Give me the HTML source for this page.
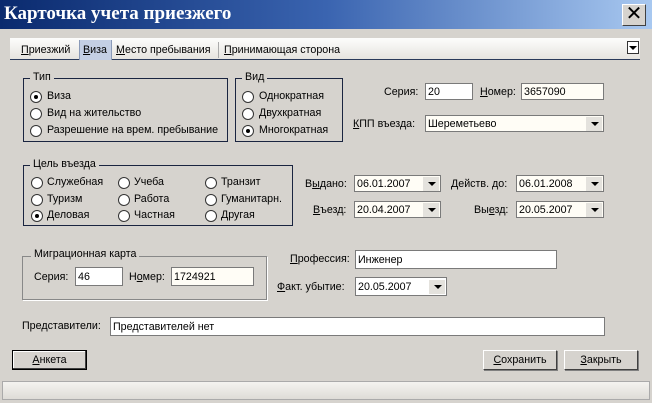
<!DOCTYPE html>
<html><head><meta charset="utf-8"><style>
body{margin:0;width:652px;height:403px;background:#d6d3ce;font-family:"Liberation Sans","DejaVu Sans",sans-serif;font-size:10.7px;color:#000;position:relative;overflow:hidden}
.a{position:absolute;white-space:nowrap}
.title{left:0;top:0;width:652px;height:29px;background:linear-gradient(90deg,#0a2a6e 0%,#3a64b0 50%,#a8c8f0 100%)}
.title span{position:absolute;left:4px;top:3px;font-family:"Liberation Serif",serif;font-weight:bold;font-size:19px;color:#fff}
.xb{left:622px;top:4px;width:22px;height:20px;background:#d6d3ce;border:1px solid #fff;border-right-color:#404040;border-bottom-color:#404040;font-size:20px;line-height:19px;text-align:center}
.strip{left:10px;top:38px;width:630px;height:21px;background:linear-gradient(#fdfdfc,#e6e4df);border-bottom:1px solid #2a3a5a}
.tab{top:44px}
.g{position:absolute;border:1px solid #1a2440}
.g2{position:absolute;border:1px solid #888;box-shadow:1px 1px 0 #fff}
.lg{position:absolute;top:-8px;left:6px;background:#d6d3ce;padding:0 3px}
.r{position:absolute;width:10px;height:10px;border-radius:50%;background:#fff;border:1px solid #333}
.r.on::after{content:"";position:absolute;left:3px;top:3px;width:4px;height:4px;border-radius:50%;background:#000}
.in{position:absolute;background:#fff;border:1px solid #7a7a7a;height:17px;line-height:17px;padding-left:2px;box-sizing:border-box}
.cb .ar{position:absolute;right:1px;top:1px;width:16px;height:14px;background:#e4e2dd}
.cb .ar::after{content:"";position:absolute;left:5px;top:5px;border-left:4px solid transparent;border-right:4px solid transparent;border-top:4px solid #000}
.btn{position:absolute;height:20px;line-height:19px;text-align:center;background:#d6d3ce;border:1px solid #fff;border-right-color:#404040;border-bottom-color:#404040;box-sizing:border-box;box-shadow:1px 1px 0 #808080}
u{text-decoration:underline}
</style></head><body>
<div class="a title"><span>Карточка учета приезжего</span></div>
<div class="a xb">✕</div>
<div class="a strip"></div>
<div class="a" style="left:79px;top:40px;width:31px;height:20px;background:#c4cfe4;border-left:1px solid #8a9ab8;border-right:1px solid #8a9ab8"></div>
<div class="a tab" style="left:21px"><u>П</u>риезжий</div>
<div class="a tab" style="left:83px"><u>В</u>иза</div>
<div class="a tab" style="left:116px"><u>М</u>есто пребывания</div>
<div class="a" style="left:218px;top:42px;width:1px;height:16px;background:#aaa"></div>
<div class="a tab" style="left:224px"><u>П</u>ринимающая сторона</div>
<div class="a" style="left:627px;top:41px;width:10px;height:11px;border:1px solid #333;background:#fff"></div>
<div class="a" style="left:629px;top:46px;border-left:4px solid transparent;border-right:4px solid transparent;border-top:4px solid #000"></div>

<div class="g" style="left:23px;top:78px;width:203px;height:62px"><span class="lg">Тип</span></div>
<div class="r on a" style="left:30px;top:91px"></div><div class="a" style="left:47px;top:90px">Виза</div>
<div class="r a" style="left:30px;top:108px"></div><div class="a" style="left:47px;top:107px">Вид на жительство</div>
<div class="r a" style="left:30px;top:125px"></div><div class="a" style="left:47px;top:124px">Разрешение на врем. пребывание</div>

<div class="g" style="left:235px;top:78px;width:106px;height:62px"><span class="lg">Вид</span></div>
<div class="r a" style="left:242px;top:91px"></div><div class="a" style="left:259px;top:90px">Однократная</div>
<div class="r a" style="left:242px;top:108px"></div><div class="a" style="left:259px;top:107px">Двухкратная</div>
<div class="r on a" style="left:242px;top:125px"></div><div class="a" style="left:259px;top:124px">Многократная</div>

<div class="a" style="left:384px;top:86px">Серия:</div>
<div class="in" style="left:425px;top:83px;width:48px">20</div>
<div class="a" style="left:480px;top:86px"><u>Н</u>омер:</div>
<div class="in" style="left:521px;top:83px;width:83px;background:#fffdf6">3657090</div>
<div class="a" style="left:353px;top:118px"><u>К</u>ПП въезда:</div>
<div class="in cb" style="left:425px;top:115px;width:179px;background:#fffdf6">Шереметьево<span class="ar"></span></div>

<div class="g" style="left:23px;top:165px;width:268px;height:59px"><span class="lg">Цель въезда</span></div>
<div class="r a" style="left:31px;top:177px"></div><div class="a" style="left:47px;top:176px">Служебная</div>
<div class="r a" style="left:31px;top:194px"></div><div class="a" style="left:47px;top:193px">Туризм</div>
<div class="r on a" style="left:31px;top:210px"></div><div class="a" style="left:47px;top:209px">Деловая</div>
<div class="r a" style="left:118px;top:177px"></div><div class="a" style="left:134px;top:176px">Учеба</div>
<div class="r a" style="left:118px;top:194px"></div><div class="a" style="left:134px;top:193px">Работа</div>
<div class="r a" style="left:118px;top:210px"></div><div class="a" style="left:134px;top:209px">Частная</div>
<div class="r a" style="left:205px;top:177px"></div><div class="a" style="left:221px;top:176px">Транзит</div>
<div class="r a" style="left:205px;top:194px"></div><div class="a" style="left:221px;top:193px">Гуманитарн.</div>
<div class="r a" style="left:205px;top:210px"></div><div class="a" style="left:221px;top:209px">Другая</div>

<div class="a" style="left:305px;top:178px">В<u>ы</u>дано:</div>
<div class="in cb" style="left:354px;top:175px;width:87px;background:#fffdf6">06.01.2007<span class="ar"></span></div>
<div class="a" style="left:451px;top:178px"><u>Д</u>ейств. до:</div>
<div class="in cb" style="left:516px;top:175px;width:88px;background:#fffdf6">06.01.2008<span class="ar"></span></div>
<div class="a" style="left:313px;top:204px"><u>В</u>ъезд:</div>
<div class="in cb" style="left:354px;top:201px;width:87px;background:#fffdf6">20.04.2007<span class="ar"></span></div>
<div class="a" style="left:474px;top:204px">Вы<u>е</u>зд:</div>
<div class="in cb" style="left:516px;top:201px;width:88px;background:#fffdf6">20.05.2007<span class="ar"></span></div>

<div class="g2" style="left:22px;top:256px;width:243px;height:42px"><span class="lg" style="top:-9px;left:8px">Миграционная карта</span></div>
<div class="a" style="left:34px;top:271px">Серия:</div>
<div class="in" style="left:75px;top:267px;width:48px;height:19px;line-height:19px">46</div>
<div class="a" style="left:129px;top:271px">Н<u>о</u>мер:</div>
<div class="in" style="left:171px;top:267px;width:83px;height:19px;line-height:19px;background:#fffdf6">1724921</div>

<div class="a" style="left:290px;top:253px"><u>П</u>рофессия:</div>
<div class="in" style="left:355px;top:250px;width:202px;height:19px;line-height:19px">Инженер</div>
<div class="a" style="left:277px;top:281px"><u>Ф</u>акт. убытие:</div>
<div class="in cb" style="left:355px;top:277px;width:92px;height:19px;line-height:19px">20.05.2007<span class="ar" style="top:2px"></span></div>

<div class="a" style="left:22px;top:320px">Представители:</div>
<div class="in" style="left:110px;top:317px;width:495px;height:19px;line-height:19px">Представителей нет</div>

<div class="btn" style="left:12px;top:350px;width:75px;border:1px solid #000;box-shadow:inset -1px -1px 0 #404040,inset 1px 1px 0 #fff"><u>А</u>нкета</div>
<div class="btn" style="left:483px;top:350px;width:74px"><u>С</u>охранить</div>
<div class="btn" style="left:564px;top:350px;width:74px"><u>З</u>акрыть</div>

<div class="a" style="left:2px;top:381px;width:648px;height:19px;background:linear-gradient(#f4f3f0,#dedcd7);border:1px solid #aaa;box-sizing:border-box"></div>
</body></html>
